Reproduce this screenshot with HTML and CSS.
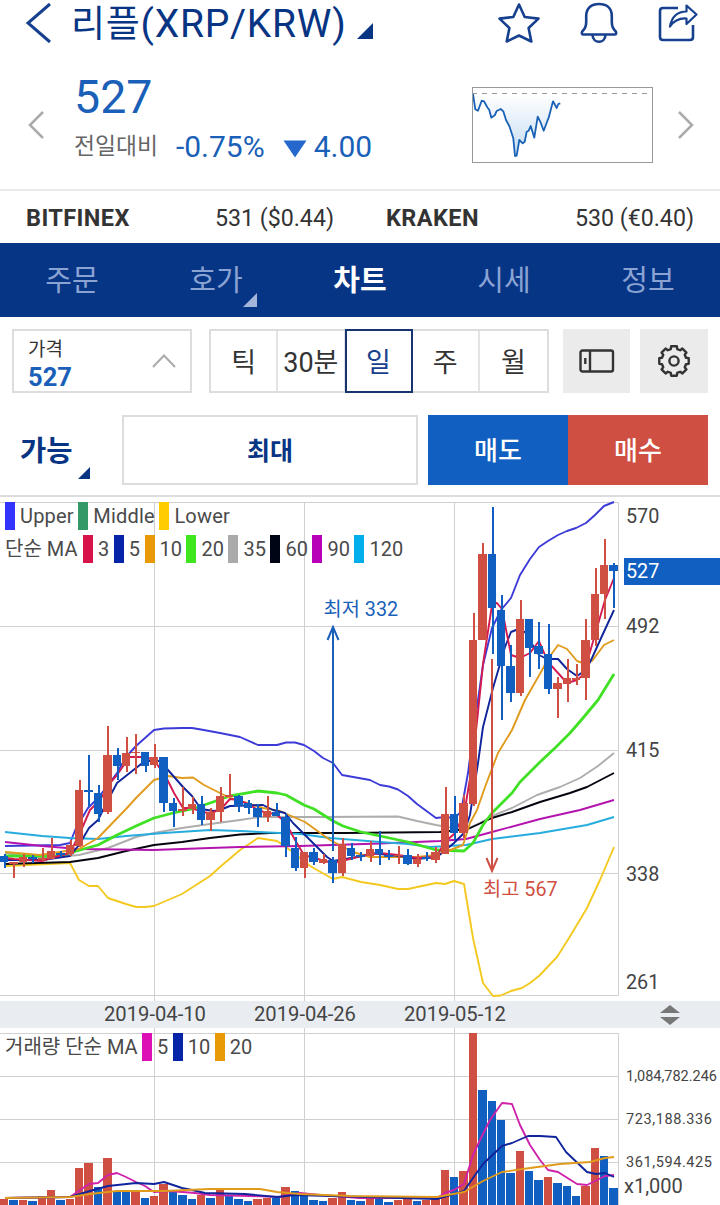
FILE: index.html
```html
<!DOCTYPE html>
<html lang="ko">
<head>
    <meta charset="UTF-8">
    <meta name="viewport" content="width=device-width, initial-scale=1.0">
    <title>리플(XRP/KRW)</title>
    <link rel="stylesheet" href="styles.css">
</head>
<body>
    <header class="header">
        <svg class="back" width="26" height="42" viewBox="0 0 26 42"><path d="M24 2 L2 21 L24 40"/></svg>
        <h1><span class="ko">리플</span>(XRP/KRW)</h1>
        <svg class="corner" width="16" height="16" viewBox="0 0 16 16"><path d="M16 0V16H0z"/></svg>
        <div class="header-icons">
            <svg width="44" height="44" viewBox="0 0 44 44"><path d="M22 4.500 L27.700 17 L41.500 18.600 L31.600 28 L34.300 41.500 L22 35.500 L9.700 41.500 L12.400 28 L2.500 18.600 L16.300 17z"/></svg>
            <svg width="40" height="44" viewBox="0 0 40 44"><path d="M4.500 34.500 H35.500 Q38 34.500 36.800 31.500 Q32.800 28 32.800 22 V16 C32.800 8 27.500 4 20 4 S7.200 8 7.200 16 V22 Q7.200 28 3.200 31.500 Q2 34.500 4.500 34.500z M13.500 35 C14 44 26 44 26.500 35"/></svg>
            <svg width="42" height="44" viewBox="0 0 42 44"><path d="M21 8 H6 Q3 8 3 11 V37 Q3 40 6 40 H33 Q36 40 36 37 V25"/><path class="thin" d="M13 26.500 C15 15.500 21 11.500 29.500 11.500 V5.500 L39.500 14.500 L29.500 24 V18.500 C22 18 17 20.500 13 26.500z"/></svg>
        </div>
    </header>

    <section class="quote">
        <svg class="arrow" width="17" height="30" viewBox="0 0 17 30"><path d="M15 2 L2 15 L15 28"/></svg>
        <div class="quote-text">
            <div class="price">527</div>
            <div class="change">
                <span class="label">전일대비</span>
                <span class="percent">-0.75%</span>
                <svg width="24" height="18" viewBox="0 0 24 18"><path d="M0.5 0.5H23.5L12 17.5z"/></svg>
                <span>4.00</span>
            </div>
        </div>
        <svg class="spark" width="181" height="76" viewBox="0 0 181 76">
            <defs>
                <linearGradient id="sparkFill" x1="0" y1="0" x2="0" y2="1">
                    <stop offset="0" stop-color="#ffffff"/>
                    <stop offset="1" stop-color="#c5dcf2"/>
                </linearGradient>
            </defs>
            <path fill="url(#sparkFill)" d="M1 6.5L3.3 22.3L6 23.7L9.7 13.7L12 14.3L17.3 23L19.3 30.7L22.7 28.3L24.7 24L28.7 22L31.3 24.3L34 33L37.3 39L41.3 51.3L43 69L44.7 68.7L47.3 53L50.7 56.3L52.7 54.7L54.7 44.7L58.7 39L62.3 50.7L65.7 29.7L71.7 43.7L76.7 30.7L81 14.3L84.7 21L88.3 16.3V6.5z"/>
            <path class="dash" d="M0 6.5H176"/>
            <polyline points="1,7 3.3,22.3 6,23.7 9.7,13.7 12,14.3 15.3,20.3 17.3,23 19.3,30.7 22.7,28.3 24.7,24 28.7,22 31.3,24.3 34,33 37.3,39 41.3,51.3 43,69 44.7,68.7 47.3,53 50.7,56.3 52.7,54.7 54.7,44.7 56.7,43.7 58.7,39 62.3,50.7 65.7,29.7 68.7,35.7 71.7,43.7 74.7,35.7 76.7,30.7 81,14.3 84.7,21 86.3,17 88.3,16.3"/>
            <rect class="frame" x="0.5" y="0.5" width="180" height="75"/>
        </svg>
        <svg class="arrow" width="17" height="30" viewBox="0 0 17 30"><path d="M2 2 L15 15 L2 28"/></svg>
    </section>

    <section class="rates">
        <div class="rate"><b>BITFINEX</b><span>531 ($0.44)</span></div>
        <div class="rate"><b>KRAKEN</b><span>530 (€0.40)</span></div>
    </section>

    <nav class="tabs">
        <a>주문</a>
        <a>호가<svg width="14" height="14" viewBox="0 0 14 14"><path d="M14 0V14H0z"/></svg></a>
        <a class="active">차트</a>
        <a>시세</a>
        <a>정보</a>
    </nav>

    <section class="tools">
        <div class="price-box">
            <div>
                <div class="name">가격</div>
                <div class="value">527</div>
            </div>
            <svg width="24" height="14" viewBox="0 0 24 14"><path d="M1 13L12 1.5L23 13"/></svg>
        </div>
        <div class="periods">
            <span>틱</span>
            <span>30분</span>
            <span class="active">일</span>
            <span>주</span>
            <span>월</span>
        </div>
        <div class="tool">
            <svg width="36" height="24" viewBox="0 0 36 24"><rect x="1.5" y="1.5" width="32.5" height="21" rx="2"/><path d="M11 1.5V22.5"/><path d="M6.3 9V15"/></svg>
        </div>
        <div class="tool">
            <svg width="34" height="34" viewBox="0 0 34 34"><path id="gear"/><circle cx="17" cy="17" r="4.6"/></svg>
        </div>
    </section>

    <section class="order">
        <div class="available">가능<svg width="12" height="12" viewBox="0 0 12 12"><path d="M12 0V12H0z"/></svg></div>
        <div class="max">최대</div>
        <div class="sell">매도</div>
        <div class="buy">매수</div>
    </section>

    <section class="chart">
        <div class="legend">
            <div class="legend-row bands">
                <i class="c-upper"></i>Upper
                <i class="c-middle"></i>Middle
                <i class="c-lower"></i>Lower
            </div>
            <div class="legend-row">
                <span class="title">단순 MA</span>
                <i class="c-ma3"></i>3
                <i class="c-ma5"></i>5
                <i class="c-ma10"></i>10
                <i class="c-ma20"></i>20
                <i class="c-ma35"></i>35
                <i class="c-ma60"></i>60
                <i class="c-ma90"></i>90
                <i class="c-ma120"></i>120
            </div>
        </div>
        <svg width="720" height="504" viewBox="0 497 720 504">
            <path class="grid" d="M0 502.5H618.5V995.5H0M0 626.5H618M0 750.5H618M0 873.5H618M154.5 502V1001M304.5 502V1001M454.5 502V1001"/>
            <g class="lines">
                <polyline class="upper" points="5,846 60,845 70,843 76,828 88,808 98,798 108,785 117,773 126,757 136,746 154,730 164,728.5 182,728 192,728 201,729.5 220,733 240,737 258,745 277,745 286,742.5 295,742.5 304,745 314,751 323,758 333,763 342,775 370,780 380,785 389,786.5 398,789.5 408,796 417,804 436,818 445,817 454,818 461,812 468,773 473,735 483,665 492,628 501,610 511,598 520,575 530,559 539,547 548,541 558,535 567,531 576,528 586,523 595,515 604,506 614,502"/>
                <polyline class="lower" points="5,866 70,863 79,880 89,886 98,886 108,898 126,904 136,907 145,907 154,906 182,894 210,876 220,867 240,850 258,838 277,841 290,850 310,866 333,879 342,877 361,882 380,885 398,889 408,889 436,883 445,884 454,881 464,884 473,938 483,983 493,996 501,995.5 511,991 522,988 530,983 539,976 557,957 569,938 587,908 600,880 614,847"/>
                <polyline class="ma35" points="5,853 42,858 79,855 108,848 136,837 154,833 182,828 210,824 240,820 260,817 320,817 398,816.5 417,821 436,825 464,830 480,823 492,816 512,808 537,795 560,787 580,778 598,766 614,753"/>
                <polyline class="ma60" points="5,864 70,862 98,858 126,851 154,845 182,842 210,838 240,834.5 270,833 345,833 440,832 468,829 492,818 512,812 540,802 570,793 587,787 614,773"/>
                <polyline class="ma90" points="5,842 42,846 79,849 154,850 210,848 240,847 300,846 380,843.5 440,841 466,839 492,832 540,819 580,810 614,800"/>
                <polyline class="ma120" points="5,832 42,836 70,838 98,839 126,836 164,833 210,830 240,831 300,834 330,838 380,842 408,844 430,847 466,845 492,839 540,833 587,825 614,817"/>
                <polyline class="ma20" points="5,856 60,856 80,850 98,845 117,835 136,826 154,818 173,813 192,809 210,803 230,796 258,791 277,793 286,795 304,805 314,809 333,821 343,826 361,832 380,836 408,842 436,850 464,851 473,843 483,825 492,813 512,793 520,782 540,762 555,748 570,733 583,718 598,700 614,674"/>
                <polyline class="ma10" points="5,852 40,855 79,849 98,838 126,809 136,798 154,780 168,776 182,778 193,777.5 204,785 220,793 230,798 247,803 263,808 280,811 305,822 330,840 353,852 370,857 397,857 417,857 437,855 453,849 463,845 470,823 477,810 485,787 498,753 512,730 525,700 541,672 548,659 558,645 567,649 577,661 583,663 592,661 604,645 614,640"/>
                <polyline class="ma5" points="5,860 42,860 70,856 79,845 89,828 98,820 108,800 117,783 136,768 145,761 160,761 168,770 183,787 192,796 201,809 214,811 220,810 230,806 263,805 273,810 285,813 293,823 310,840 327,857 333,861 363,856 370,853 400,856 417,859 437,857 454,843 464,833 470,815 478,763 483,727 493,688 505,647 511,632 516,630 525,632 532,644 539,655 547,659 558,659 567,669 577,676 586,670 592,658 602,636 614,610"/>
                <polyline class="ma3" points="5,858 14,859 42,861 51,858 70,853 80,833 90,810 100,800 110,783 117,775 126,762 130,757 145,757 154,760 166,777 174,793 183,808 192,808 201,812 210,813 220,810 230,799 238,800 248,804 258,810 267,813 276,814 286,823 295,840 304,855 314,858 333,863 342,861 361,856 380,853 398,855 417,858 436,857 445,842 454,834 464,815 473,760 483,664 492,605 497,603 502,609 511,655 520,658 530,653 539,641 548,662 558,673 567,683 577,680 583,675 590,652 605,600 614,578"/>
            </g>
            <g id="candles"></g>
            <path class="mark-low" d="M333 851V627M327.5 640L333 627L338.5 640"/>
            <text class="text-low" x="323.5" y="616">최저 332</text>
            <path class="mark-high" d="M492 659V871M486.5 858L492 871L497.5 858"/>
            <text class="text-high" x="483" y="895.5">최고 567</text>
            <rect class="now" x="624" y="558" width="96" height="27"/>
            <g class="axis">
                <text x="626" y="523">570</text>
                <text x="626" y="633">492</text>
                <text x="626" y="757">415</text>
                <text x="626" y="881">338</text>
                <text x="626" y="989">261</text>
                <text class="on" x="626" y="578">527</text>
            </g>
        </svg>
    </section>

    <div class="dates">
        <span>2019-04-10</span>
        <span>2019-04-26</span>
        <span>2019-05-12</span>
        <svg width="20" height="20" viewBox="0 0 20 20"><path d="M0 8L10 0L20 8zM0 12L10 20L20 12z"/></svg>
    </div>

    <section class="chart volume">
        <div class="legend">
            <div class="legend-row">
                <span class="title">거래량 단순 MA</span>
                <i class="c-v5"></i>5
                <i class="c-ma5"></i>10
                <i class="c-ma10"></i>20
            </div>
        </div>
        <svg width="720" height="177" viewBox="0 1028 720 177">
            <path class="grid" d="M0 1033.5H618.5V1205M0 1076.5H618M0 1119.5H618M0 1162.5H618M154.5 1028V1205M304.5 1028V1205M454.5 1028V1205"/>
            <g id="bars"></g>
            <g class="lines">
                <polyline class="v5" points="5,1198 70,1197 80,1190 89,1184 98,1183 108,1175 117,1173 126,1177 136,1182 145,1186 154,1192 170,1191 195,1193 210,1195 250,1196 280,1197 300,1193 320,1195 360,1198 437,1198 445,1193 454,1190 464,1184 473,1155 480,1140 490,1120 502,1103 512,1104 520,1125 530,1145 540,1160 548,1170 558,1172 577,1184 587,1185 605,1176 614,1175"/>
                <polyline class="ma5" points="5,1198 70,1197 90,1191 108,1186 136,1183 154,1184 164,1182 182,1188 192,1190 205,1193 245,1194 277,1197 295,1195 437,1199 464,1191 473,1178 483,1164 502,1146 512,1143 528,1136 540,1136 556,1137 566,1152 587,1172 596,1174 605,1173 614,1177"/>
                <polyline class="ma10" points="5,1198 70,1197 90,1194 117,1191 164,1191 210,1189 260,1189 277,1192 300,1194 350,1196 437,1197 464,1192 483,1181 502,1172 530,1168 560,1164 590,1162 605,1158 614,1157"/>
            </g>
            <g class="axis small">
                <text x="626" y="1081">1,084,782.246</text>
                <text class="wide" x="626" y="1124">723,188.336</text>
                <text class="wide" x="626" y="1167">361,594.425</text>
            </g>
            <text class="unit" x="624" y="1193">x1,000</text>
        </svg>
    </section>

    <script>
        const NS = 'http://www.w3.org/2000/svg';
        const UP = '#cf4f43';
        const DOWN = '#115fc0';
        const STEP = 9.375;

        // direction, high, body top, body bottom, low
        const candles = [
            ['d', 854, 856, 862, 868], ['u', 862, 862, 864, 878], ['u', 854, 857, 862, 867], ['d', 855, 857, 859, 863],
            ['u', 848, 858, 860, 861], ['u', 838, 851, 859, 859], ['d', 851, 853, 855, 857], ['u', 840, 845, 854, 856],
            ['u', 780, 790, 846, 847], ['d', 755, 790, 792, 807], ['d', 785, 793, 814, 822], ['u', 726, 755, 812, 814],
            ['d', 748, 755, 766, 780], ['u', 737, 753, 766, 772], ['u', 734, 752, 753, 774], ['d', 752, 752, 766, 772],
            ['u', 744, 757, 765, 768], ['d', 757, 757, 803, 812], ['d', 798, 803, 811, 827], ['u', 787, 809, 811, 816],
            ['u', 797, 804, 809, 814], ['d', 796, 804, 820, 825], ['u', 808, 812, 820, 831], ['u', 787, 796, 812, 822],
            ['u', 774, 795, 797, 797], ['d', 795, 796, 806, 812], ['d', 800, 803, 808, 814], ['d', 804, 808, 817, 827],
            ['u', 796, 811, 817, 822], ['d', 803, 812, 816, 816], ['d', 814, 817, 846, 857], ['d', 837, 848, 868, 871],
            ['u', 852, 852, 868, 878], ['d', 848, 852, 862, 865], ['u', 854, 859, 863, 864], ['d', 857, 860, 873, 883],
            ['u', 838, 844, 873, 876], ['d', 843, 848, 856, 860], ['d', 852, 855, 857, 861], ['u', 841, 849, 856, 862],
            ['d', 831, 849, 854, 865], ['d', 850, 855, 857, 860], ['u', 846, 855, 856, 864], ['d', 849, 855, 864, 865],
            ['u', 854, 859, 864, 867], ['d', 852, 857, 859, 861], ['u', 847, 852, 860, 863], ['u', 787, 814, 854, 854],
            ['d', 796, 814, 833, 840], ['u', 795, 803, 833, 838], ['u', 613, 640, 804, 806], ['u', 543, 554, 640, 640],
            ['d', 507, 554, 608, 654], ['d', 595, 610, 666, 720], ['d', 645, 666, 693, 702], ['u', 600, 619, 693, 696],
            ['d', 619, 619, 648, 677], ['d', 622, 646, 654, 669], ['d', 624, 654, 689, 694], ['u', 677, 683, 689, 718],
            ['u', 659, 678, 684, 702], ['u', 664, 678, 680, 685], ['u', 619, 640, 678, 700], ['u', 568, 594, 640, 646],
            ['u', 539, 565, 594, 619], ['d', 563, 565, 571, 608]
        ];

        // direction, top of the bar
        const volumes = [
            ['u', 1199], ['d', 1200], ['u', 1200], ['d', 1201], ['u', 1196], ['u', 1190], ['d', 1200], ['u', 1199],
            ['u', 1168], ['u', 1163], ['d', 1187], ['u', 1158], ['d', 1192], ['d', 1192], ['u', 1191], ['d', 1198],
            ['u', 1196], ['u', 1184], ['d', 1191], ['d', 1195], ['d', 1199], ['u', 1195], ['d', 1198], ['u', 1190],
            ['d', 1195], ['d', 1199], ['d', 1201], ['u', 1199], ['u', 1198], ['d', 1198], ['u', 1187], ['d', 1191],
            ['d', 1195], ['d', 1200], ['d', 1201], ['u', 1198], ['u', 1192], ['d', 1200], ['d', 1201], ['u', 1197],
            ['d', 1197], ['d', 1202], ['u', 1200], ['u', 1199], ['d', 1201], ['u', 1200], ['u', 1199], ['u', 1170],
            ['d', 1177], ['u', 1171], ['u', 1033], ['d', 1090], ['d', 1101], ['d', 1120], ['d', 1173], ['u', 1151],
            ['d', 1171], ['d', 1180], ['u', 1177], ['d', 1183], ['d', 1186], ['d', 1196], ['u', 1186], ['u', 1148],
            ['d', 1156], ['d', 1188]
        ];

        function rect(parent, x, y, w, h, color) {
            const el = document.createElementNS(NS, 'rect');
            el.setAttribute('x', x);
            el.setAttribute('y', y);
            el.setAttribute('width', w);
            el.setAttribute('height', h);
            el.setAttribute('fill', color);
            parent.appendChild(el);
        }

        // whole-pixel columns with a 1px gap
        function column(i) {
            const left = Math.round(i * STEP);
            return { left: left, width: Math.round((i + 1) * STEP) - left - 1 };
        }

        const candleBox = document.getElementById('candles');
        candles.forEach(function(c, i) {
            const col = column(i);
            const color = c[0] === 'u' ? UP : DOWN;
            rect(candleBox, col.left + 4, c[1], 2, c[4] - c[1], color);
            rect(candleBox, col.left, c[2], col.width, c[3] - c[2], color);
        });

        const barBox = document.getElementById('bars');
        volumes.forEach(function(v, i) {
            const col = column(i);
            rect(barBox, col.left, v[1], col.width, 1205 - v[1], v[0] === 'u' ? UP : DOWN);
        });

        // settings gear, eight teeth
        let d = '';
        for (let t = 0; t < 8; t++) {
            [[-15, 12.4], [-11, 15], [11, 15], [15, 12.4]].forEach(function(p) {
                const a = (t * 45 + p[0]) * Math.PI / 180;
                d += (d ? 'L' : 'M') + (17 + p[1] * Math.sin(a)).toFixed(2) + ' ' + (17 - p[1] * Math.cos(a)).toFixed(2);
            });
        }
        document.getElementById('gear').setAttribute('d', d + 'z');
    </script>
</body>
</html>
```

FILE: styles.css
```css
* {
    margin: 0;
    padding: 0;
    box-sizing: border-box;
}

body {
    width: 720px;
    height: 1205px;
    overflow: hidden;
    background: #fff;
    color: #333;
    font-family: Roboto, 'Noto Sans CJK KR', sans-serif;
}

svg {
    display: block;
    flex: none;
}

.header {
    display: flex;
    height: 50px;
    padding: 0 21px 0 26px;
    color: #083484;
}

.back {
    margin-top: 2px;
    fill: none;
    stroke: #17408f;
    stroke-width: 3;
}

.header h1 {
    margin-left: 19px;
    font-size: 39px;
    font-weight: 400;
    line-height: 48px;
    letter-spacing: 0.75px;
    white-space: nowrap;
}

.header .ko {
    font-size: 37px;
}

.corner {
    margin: 23px 0 0 10px;
    fill: #083484;
}

.header-icons {
    display: flex;
    margin-left: auto;
    gap: 38px;
    fill: none;
    stroke: #17408f;
    stroke-width: 2.6;
    stroke-linejoin: round;
}

.header-icons .thin {
    stroke-width: 2.2;
}

.quote {
    display: flex;
    height: 141px;
    padding: 0 26px 0 28px;
    border-bottom: 2px solid #eaeaea;
}

.arrow {
    margin-top: 60px;
    fill: none;
    stroke: #aaa;
    stroke-width: 2.5;
}

.quote-text {
    flex: 1;
    padding-left: 29px;
    color: #1a5fb8;
}

.price {
    margin-top: 20px;
    font-size: 46.5px;
    line-height: 55px;
}

.change {
    display: flex;
    align-items: center;
    height: 44px;
    font-size: 30px;
    line-height: 46px;
}

.change svg {
    margin: 4px 7px 0 18px;
    fill: #2567cc;
}

.change .label {
    color: #666;
    font-size: 22.8px;
}

.change .percent {
    margin-left: 18px;
}

.spark {
    margin: 37px 24px 0 0;
    fill: none;
}

.spark polyline {
    stroke: #1a62b5;
    stroke-width: 1.8;
    stroke-linejoin: round;
}

.spark .dash {
    stroke: #999;
    stroke-dasharray: 5 5;
}

.spark .frame {
    stroke: #999;
}

.rates {
    display: flex;
    height: 52px;
    padding: 0 26px;
    gap: 52px;
    font-size: 23.2px;
    line-height: 54px;
}

.rate {
    display: flex;
    flex: 1;
    justify-content: space-between;
    white-space: nowrap;
}

.rate b {
    font-weight: 700;
    font-size: 23.5px;
    letter-spacing: 0.4px;
    line-height: 55px;
}

.tabs {
    display: flex;
    height: 74px;
    background: #063585;
    color: #8ba3d3;
    font-size: 29px;
    line-height: 77px;
}

.tabs a {
    position: relative;
    flex: 1;
    text-align: center;
}

.tabs svg {
    position: absolute;
    left: 99px;
    top: 50px;
    fill: #a3b5db;
}

.tabs .active {
    color: #fff;
    font-weight: 700;
}

.tools {
    display: flex;
    height: 76px;
    padding: 12px 12px 0;
}

.price-box {
    display: flex;
    align-items: center;
    justify-content: space-between;
    width: 180px;
    height: 64px;
    padding: 0 14px;
    border: 2px solid #ddd;
}

.price-box .name {
    margin-top: 3px;
    font-size: 19px;
    line-height: 28px;
}

.price-box .value {
    color: #1a5fb8;
    font-size: 25.5px;
    font-weight: 700;
    line-height: 26px;
}

.price-box svg {
    fill: none;
    stroke: #aaa;
    stroke-width: 2;
}

.periods {
    display: flex;
    width: 340px;
    height: 64px;
    margin: 0 14px 0 17px;
    border: 2px solid #ddd;
    font-size: 27px;
    line-height: 64px;
    text-align: center;
}

.periods span {
    width: 68px;
    border-right: 2px solid #e4e4e4;
    white-space: nowrap;
}

.periods span:last-child {
    border-right: 0;
}

.periods .active {
    flex: none;
    height: 64px;
    margin: -2px 0 0 -1px;
    border: 2px solid #16346f;
    color: #17408f;
}

.tool {
    display: flex;
    align-items: center;
    justify-content: center;
    width: 67px;
    height: 64px;
    background: #ebebeb;
    fill: none;
    stroke: #333;
    stroke-width: 2.4;
    stroke-linejoin: round;
}

.tool + .tool {
    width: 68px;
    margin-left: 10px;
}

.order {
    display: flex;
    height: 104px;
    padding: 22px 12px 10px;
    border-bottom: 2px solid #ddd;
    font-size: 26px;
    font-weight: 500;
    line-height: 73px;
    text-align: center;
}

.available {
    position: relative;
    width: 110px;
    padding-left: 8px;
    color: #083484;
    font-size: 28.5px;
    font-weight: 700;
    text-align: left;
}

.available svg {
    position: absolute;
    left: 66px;
    top: 52px;
    fill: #083484;
}

.max {
    width: 296px;
    height: 70px;
    margin-right: 10px;
    border: 2px solid #ddd;
    color: #083484;
    font-size: 25px;
    font-weight: 700;
    line-height: 70px;
}

.sell,
.buy {
    width: 140px;
    height: 70px;
    background: #115fc0;
    color: #fff;
}

.buy {
    background: #cf4f43;
}

.chart {
    position: relative;
    height: 504px;
}

.legend {
    position: absolute;
    left: 5px;
    top: 5px;
    color: #4a4a4a;
    font-size: 20px;
}

.legend-row {
    display: flex;
    height: 28px;
    margin-bottom: 5px;
    line-height: 29px;
    white-space: nowrap;
}

.legend-row i {
    width: 10px;
    height: 28px;
    margin: 0 5px 0 4.5px;
}

.legend-row i:first-child {
    margin-left: 0;
}

.legend-row .title {
    width: 73.5px;
}

.legend-row.bands {
    letter-spacing: 0.2px;
}

.grid {
    fill: none;
    stroke: #d0d0d0;
}

.lines {
    fill: none;
    stroke-width: 1.9;
    stroke-linejoin: round;
}

.upper { stroke: #3d3bd8; }
.lower { stroke: #f4c91f; }
.ma3 { stroke: #d31a51; }
.ma5 { stroke: #10249b; }
.ma10 { stroke: #e09a1c; }
.ma20 { stroke: #40e024; stroke-width: 2.8; }
.ma35 { stroke: #adadad; }
.ma60 { stroke: #050510; }
.ma90 { stroke: #b314ae; }
.ma120 { stroke: #26acdd; }
.v5 { stroke: #ce22ab; }

.c-upper { background: #3333ff; }
.c-middle { background: #339966; }
.c-lower { background: #ffcc00; }
.c-ma3 { background: #d6134b; }
.c-ma5 { background: #0524a8; }
.c-ma10 { background: #e79a05; }
.c-ma20 { background: #3fe61e; }
.c-ma35 { background: #aaa; }
.c-ma60 { background: #000515; }
.c-ma90 { background: #b800b8; }
.c-ma120 { background: #00aeeb; }
.c-v5 { background: #dc10b4; }

.mark-low,
.mark-high {
    fill: none;
    stroke: #1a5fb8;
    stroke-width: 2;
}

.mark-high {
    stroke: #cf4f43;
}

.text-low,
.text-high {
    fill: #1a5fb8;
    font-size: 19.8px;
}

.text-high {
    fill: #cf4f43;
}

.now {
    fill: #115fc0;
}

.axis text {
    fill: #444;
    font-size: 19.8px;
}

.axis .on {
    fill: #fff;
}

.axis.small text {
    font-size: 14.5px;
}

.axis.small .wide {
    letter-spacing: 0.6px;
}

.unit {
    fill: #444;
    font-size: 20px;
}

.dates {
    display: flex;
    height: 27px;
    padding-left: 104px;
    background: #e9edf1;
    color: #444;
    font-size: 20.2px;
    line-height: 26px;
}

.dates span {
    width: 150px;
}

.dates svg {
    margin: 4px 0 0 106px;
    fill: #777;
}

.volume {
    height: 177px;
}

.volume .title {
    width: 132.5px;
}
```
